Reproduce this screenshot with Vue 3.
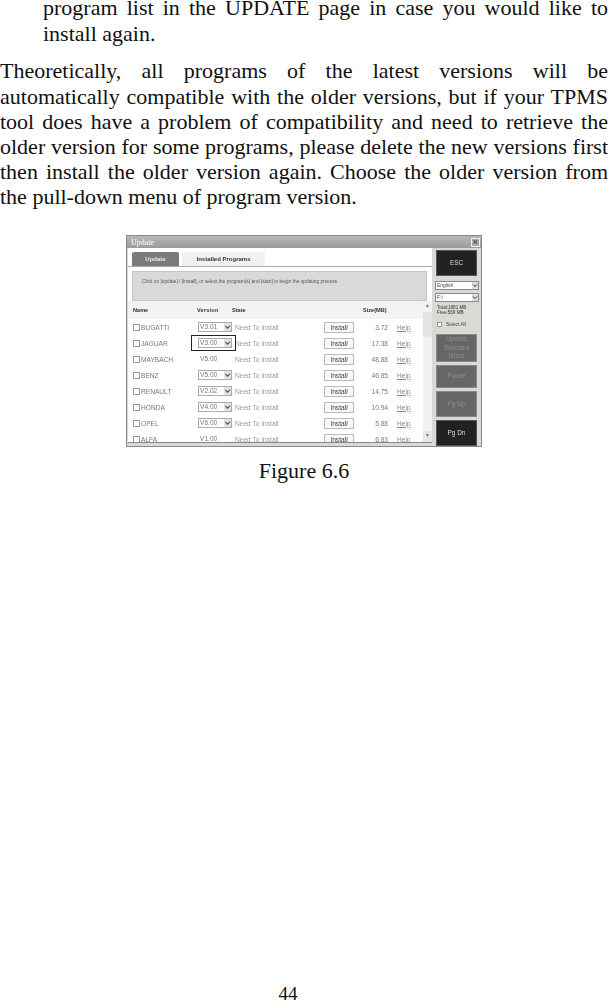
<script setup>
const rows = [
  { name: 'BUGATTI', ver: 'V3.01', select: true, size: '3.72' },
  { name: 'JAGUAR', ver: 'V3.00', select: true, size: '17.38', mark: true },
  { name: 'MAYBACH', ver: 'V5.00', select: false, size: '48.88' },
  { name: 'BENZ', ver: 'V5.00', select: true, size: '46.85' },
  { name: 'RENAULT', ver: 'V2.02', select: true, size: '14.75' },
  { name: 'HONDA', ver: 'V4.00', select: true, size: '10.94' },
  { name: 'OPEL', ver: 'V6.00', select: true, size: '5.88' },
  { name: 'ALFA', ver: 'V1.00', select: false, size: '6.83' }
]
</script>

<template>
  <main class="page">
    <p class="para indent">program list in the UPDATE page in case you would like to install again.</p>
    <p class="para main-para">Theoretically, all programs of the latest versions will be automatically compatible with the older versions, but if your TPMS tool does have a problem of compatibility and need to retrieve the older version for some programs, please delete the new versions first then install the older version again. Choose the older version from the pull-down menu of program version.</p>

    <figure class="figure">
      <div class="window">
        <header class="titlebar">
          <span>Update</span>
          <span class="close">×</span>
        </header>
        <div class="win-body">
          <section class="content">
            <nav class="tabs">
              <span class="tab active">Update</span>
              <span class="tab">Installed Programs</span>
            </nav>
            <div class="notice">Click on [update] / [install], or select the program(s) and [start] to begin the updating process</div>
            <div class="table-wrap">
              <div class="table">
                <div class="row head">
                  <span>Name</span>
                  <span class="head-ver">Version</span>
                  <span>State</span>
                  <span>Size(MB)</span>
                </div>
                <div v-for="r in rows" :key="r.name" class="row">
                  <span class="name-col"><i class="check"></i>{{ r.name }}</span>
                  <span class="ver-col" :class="{ plain: !r.select }">
                    {{ r.ver }}
                    <i v-if="r.select" class="drop"><svg viewBox="0 0 6 6"><path d="M1 2l2 2 2-2" fill="none" stroke="#555" stroke-width="1"/></svg></i>
                    <b v-if="r.mark" class="mark"></b>
                  </span>
                  <span class="state-col">Need To Install</span>
                  <span class="btn-col"><span class="install">Install</span></span>
                  <span class="size-col">{{ r.size }}</span>
                  <span class="help">Help</span>
                </div>
              </div>
              <div class="scrollbar">
                <span class="arrow">▴</span>
                <span class="thumb"></span>
                <span class="arrow down">▾</span>
              </div>
            </div>
          </section>
          <aside class="side">
            <div class="dark-btn esc">ESC</div>
            <div class="combo first"><span>English</span><i class="drop"><svg viewBox="0 0 6 6"><path d="M1 2l2 2 2-2" fill="none" stroke="#333" stroke-width="1"/></svg></i></div>
            <div class="combo"><span>F:\</span><i class="drop"><svg viewBox="0 0 6 6"><path d="M1 2l2 2 2-2" fill="none" stroke="#333" stroke-width="1"/></svg></i></div>
            <div class="disk">Total:1881 MB<br>Free:569 MB</div>
            <div class="select-all"><i class="check"></i>Select All</div>
            <div class="gray-btn update">Update<br>Selected<br>Items</div>
            <div class="gray-btn pause">Pause</div>
            <div class="gray-btn pgup">Pg Up</div>
            <div class="dark-btn pgdn">Pg Dn</div>
          </aside>
        </div>
      </div>
      <figcaption class="caption">Figure 6.6</figcaption>
    </figure>

    <footer class="page-no">44</footer>
  </main>
</template>

<style>
html, body { margin: 0; background: #fff; }
</style>

<style scoped>
.page {
  height: 1001px;
  box-sizing: border-box;
  display: flex;
  flex-direction: column;
  overflow: hidden;
  font-family: "Liberation Serif", serif;
  color: #111;
  background: #fff;
}
.para {
  margin: 0;
  font-size: 22px;
  line-height: 25.2px;
  text-align: justify;
}
.indent { margin: -4.6px 0 0 43px; }
.main-para { margin-top: 12.6px; }
.figure { margin: 25.4px 0 0; display: flex; flex-direction: column; align-items: center; }
.window {
  width: 356px;
  height: 212px;
  box-sizing: border-box;
  display: flex;
  flex-direction: column;
  background: #d9d9d5;
  border: 1px solid #8a8a8a;
  font-family: "Liberation Sans", sans-serif;
  filter: blur(0.4px);
}
.titlebar {
  height: 12px;
  flex: none;
  display: flex;
  justify-content: space-between;
  align-items: center;
  padding: 0 1px 0 4px;
  background: linear-gradient(#b8b8b8, #9a9a9a);
  color: #fff;
  font: 8px "Liberation Serif", serif;
}
.close {
  width: 9px;
  height: 9px;
  background: #a8a8a8;
  border: 1px solid #eee;
  box-sizing: border-box;
  color: #333;
  font: 9px/7px "Liberation Sans", sans-serif;
  text-align: center;
}
.win-body { flex: 1; display: flex; min-height: 0; }
.content {
  width: 304px;
  height: 195px;
  flex: none;
  background: #fff;
  display: flex;
  flex-direction: column;
  margin-left: 1px;
  border-bottom: 1px solid #888;
  box-sizing: border-box;
  min-height: 0;
}
.tabs {
  height: 14px;
  flex: none;
  margin-top: 4px;
  padding-left: 4px;
  display: flex;
  gap: 3px;
  border-bottom: 1px solid #aaa;
}
.tab {
  width: 83px;
  background: #f1f1f1;
  border-radius: 2px 2px 0 0;
  color: #333;
  font-size: 6px;
  font-weight: 700;
  line-height: 14px;
  text-align: center;
}
.tab.active { width: 47px; background: #7b7b7b; color: #e8e8e8; }
.notice {
  height: 30px;
  flex: none;
  margin: 4px 5px 0 4px;
  padding: 6px 0 0 9px;
  box-sizing: border-box;
  background: #d9d9d9;
  border: 1px solid #c6c6c6;
  color: #555;
  font-size: 4.8px;
  line-height: 8px;
  white-space: nowrap;
}
.table-wrap { flex: 1; min-height: 0; display: flex; overflow: hidden; }
.table { flex: 1; min-width: 0; }
.row {
  height: 16px;
  display: grid;
  grid-template-columns: 65px 35px 91px 30px 34px 1fr;
  align-items: center;
  color: #777;
  font-size: 6.6px;
  white-space: nowrap;
  padding-left: 5px;
}
.row.head {
  height: 18px;
  grid-template-columns: 64px 35px 131px 1fr;
  background: #f3f3f3;
  color: #333;
  font-size: 5.6px;
  font-weight: 700;
}
.head-ver { letter-spacing: 0.2px; }
.name-col { display: flex; align-items: center; gap: 1px; }
.check {
  display: inline-block;
  width: 7px;
  height: 7px;
  box-sizing: border-box;
  background: #fff;
  border: 1px solid #999;
}
.ver-col {
  position: relative;
  width: 34px;
  height: 10px;
  box-sizing: border-box;
  border: 1px solid #aaa;
  line-height: 8px;
  padding-left: 1px;
}
.ver-col.plain { border-color: transparent; }
.ver-col .drop { right: 0; top: 0; }
.drop {
  position: absolute;
  width: 7px;
  height: 8px;
  background: #e2e2e2;
  display: flex;
}
.drop svg { width: 100%; height: 100%; }
.mark {
  position: absolute;
  left: -8px;
  top: -4px;
  width: 45px;
  height: 16px;
  box-sizing: border-box;
  border: 1px solid #222;
}
.state-col { color: #999; padding-left: 2px; }
.btn-col { display: flex; }
.install {
  width: 30px;
  height: 11px;
  box-sizing: border-box;
  background: #f7f7f7;
  border: 1px solid #bbb;
  color: #444;
  text-align: center;
  line-height: 9px;
}
.size-col { text-align: right; color: #777; }
.help { padding-left: 9px; color: #888; text-decoration: underline; }
.scrollbar {
  width: 9px;
  flex: none;
  display: flex;
  flex-direction: column;
  background: #f1f1ef;
  color: #777;
  font-size: 6px;
  line-height: 9px;
  text-align: center;
}
.arrow { height: 11px; }
.arrow.down { margin-top: auto; background: #e6e6e6; }
.thumb { height: 25px; background: #e4e4e2; }
.side {
  flex: 1;
  display: flex;
  flex-direction: column;
  padding: 2px 4px 0;
  min-width: 0;
}
.dark-btn, .gray-btn {
  width: 41px;
  box-sizing: border-box;
  display: flex;
  align-items: center;
  justify-content: center;
  text-align: center;
  font-size: 6.4px;
  line-height: 8.5px;
}
.dark-btn { background: #222; color: #ddd; border: 1px solid #555; }
.gray-btn { background: #666; color: #8f8f8f; border: 1px solid #888; }
.esc { height: 27px; }
.combo {
  position: relative;
  width: 44px;
  height: 9px;
  margin: 3px 0 0 -1px;
  box-sizing: border-box;
  background: #fff;
  border: 1px solid #888;
  color: #444;
  font-size: 5px;
  line-height: 7px;
  padding-left: 1px;
}
.combo.first { margin-top: 5px; }
.combo .drop { right: 0; top: 0; width: 6px; height: 7px; background: #ddd; }
.disk { margin: 3px 0 0 1px; color: #333; font-size: 4.6px; line-height: 5px; white-space: nowrap; }
.select-all {
  display: flex;
  align-items: center;
  gap: 4px;
  margin: 6px 0 0 1px;
  color: #444;
  font-size: 4.8px;
  line-height: 7px;
}
.select-all .check { width: 5px; height: 5px; }
.update { height: 28px; margin-top: 6px; }
.pause { height: 24px; margin-top: 3px; }
.pgup { height: 26px; margin-top: 3px; }
.pgdn { height: 27px; margin-top: 3px; }
.caption {
  margin-top: 12px;
  font-size: 22px;
  line-height: 24px;
  text-align: center;
}
.page-no {
  margin-top: auto;
  font-size: 19px;
  line-height: 14px;
  text-align: center;
  transform: translateX(-16px);
}
</style>
